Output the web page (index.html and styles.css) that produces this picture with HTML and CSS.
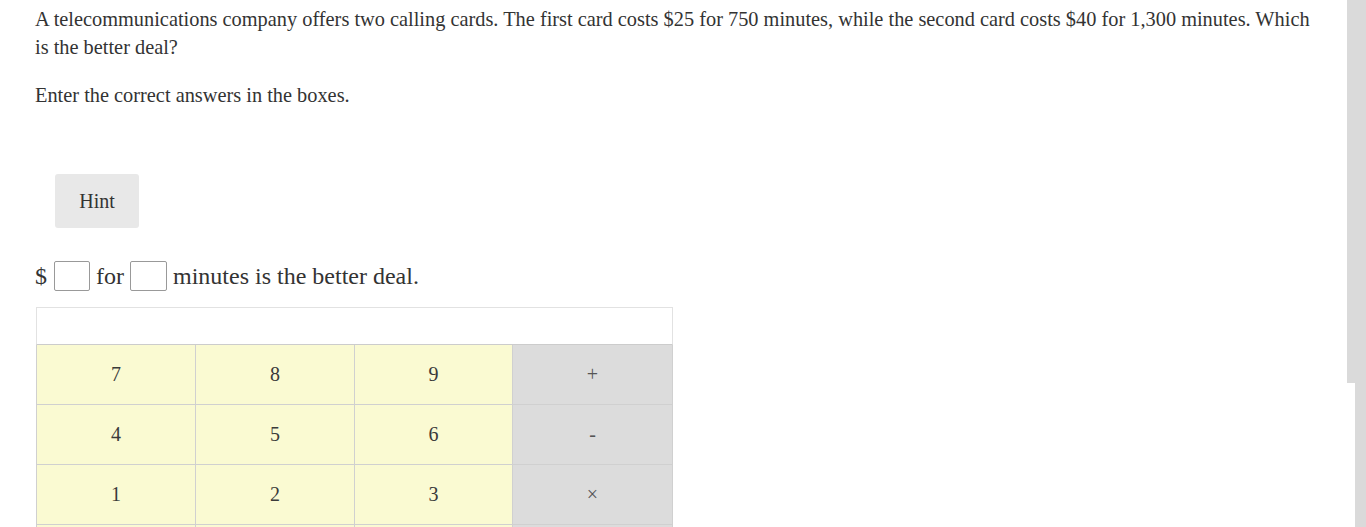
FILE: index.html
```html
<!DOCTYPE html>
<html>
<head>
<meta charset="utf-8">
<link rel="stylesheet" href="styles.css">
</head>
<body>
<div class="page">
  <main class="content">
    <p class="question">A telecommunications company offers two calling cards. The first card costs $25 for 750 minutes, while the second card costs $40 for 1,300 minutes. Which is the better deal?</p>
    <p class="instr">Enter the correct answers in the boxes.</p>
    <div class="hint-wrap"><button class="hint">Hint</button></div>
    <div class="answer">
      <span class="dollar">$</span><span class="box"></span><span>for</span><span class="box box2"></span><span>minutes is the better deal.</span>
    </div>
    <div class="keypad">
      <div class="display"></div>
      <div class="keys">
        <div class="key num">7</div><div class="key num">8</div><div class="key num">9</div><div class="key op">+</div>
        <div class="key num">4</div><div class="key num">5</div><div class="key num">6</div><div class="key op">-</div>
        <div class="key num">1</div><div class="key num">2</div><div class="key num">3</div><div class="key op">×</div>
        <div class="key num"></div><div class="key num"></div><div class="key num"></div><div class="key op"></div>
      </div>
    </div>
  </main>
  <aside class="side">
    <div class="side-top"></div>
    <div class="side-bottom"></div>
  </aside>
</div>
</body>
</html>
```

FILE: styles.css
```css
html, body { margin: 0; padding: 0; background: #fff; }
body { font-family: "Liberation Serif", "Times New Roman", serif; color: #333; overflow: hidden; }
.page { display: flex; height: 527px; overflow: hidden; }
.content { flex: 1; padding: 0 34px 0 35px; }
.question { margin: 5px 0 0; font-size: 20.35px; line-height: 28px; }
.instr { margin: 20px 0 0; font-size: 20.35px; line-height: 28px; }
.hint-wrap { padding: 65px 0 0 20px; }
.hint { font-family: inherit; font-size: 20px; color: #333; background: #e8e8e8; border: none; border-radius: 3px; width: 84px; height: 54px; padding: 0; }
.answer { display: flex; align-items: center; gap: 6px; margin-top: 33px; font-size: 24px; height: 30px; line-height: 26px; }
.dollar { margin-right: 1px; }
.box { display: inline-block; width: 34px; height: 28px; border: 1px solid #999; border-radius: 2px; background: #fff; }
.box2 { width: 35px; }
.keypad { width: 637px; margin: 16px 0 0 1px; }
.display { height: 36px; border: 1px solid #e2e2e2; border-bottom: 1px solid #ccc; background: #fff; }
.keys { display: grid; grid-template-columns: 159px 159px 158px 160px; grid-auto-rows: 60px; border-left: 1px solid #d0d0d0; }
.key { display: flex; align-items: center; justify-content: center; font-size: 20px; color: #3a3a3a; border-right: 1px solid #d0d0d0; border-bottom: 1px solid #d0d0d0; box-sizing: border-box; }
.num { background: #fafad2; }
.op { background: #dcdcdc; color: #555; }
.side { width: 19px; display: flex; flex-direction: column; align-items: flex-end; }
.side-top { width: 19px; height: 383px; background: #dadada; flex: none; }
.side-bottom { width: 11px; flex: 1; background: #dadada; }
```
